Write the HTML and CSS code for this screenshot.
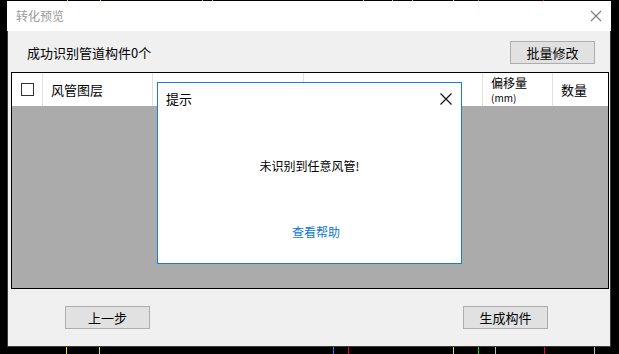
FILE: index.html
```html
<!DOCTYPE html>
<html lang="zh">
<head>
<meta charset="utf-8">
<title>转化预览</title>
<link rel="stylesheet" href="styles.css">
</head>
<body>
<div class="strip strip-top">
  <i class="tick t-y" style="left:67px"></i><i class="tick t-y" style="left:100px"></i>
  <i class="tick t-g" style="left:202px"></i><i class="tick t-g" style="left:212px"></i>
  <i class="tick t-g" style="left:363px"></i><i class="tick t-g" style="left:392px"></i>
  <i class="tick t-g" style="left:412px"></i><i class="tick t-y" style="left:453px"></i>
  <i class="tick t-gr" style="left:478px"></i><i class="tick t-r" style="left:543px"></i>
</div>
<div class="desk">
  <div class="window">
    <div class="titlebar">
      <span class="title">转化预览</span>
      <svg class="win-close" width="12" height="12" viewBox="0 0 12 12"><path d="M1 1L11 11M11 1L1 11" stroke="#7a7a7a" stroke-width="1.1" fill="none"/></svg>
    </div>
    <div class="content">
      <div class="toolbar">
        <span class="status">成功识别管道构件0个</span>
        <button class="btn">批量修改</button>
      </div>
      <div class="table">
        <div class="thead">
          <div class="th th-check"><span class="checkbox"></span></div>
          <div class="th">风管图层</div>
          <div class="th"></div>
          <div class="th"></div>
          <div class="th th-two"><span class="line">偏移量</span><span class="line unit">(mm)</span></div>
          <div class="th th-last">数量</div>
        </div>
        <div class="tbody"></div>
      </div>
      <div class="footer">
        <button class="btn">上一步</button>
        <button class="btn">生成构件</button>
      </div>
    </div>
    <div class="dialog">
      <div class="dlg-head">
        <span class="dlg-title">提示</span>
        <svg class="dlg-close" width="12" height="12" viewBox="0 0 12 12"><path d="M0.5 0.5L11.5 11.5M11.5 0.5L0.5 11.5" stroke="#111" stroke-width="1.2" fill="none"/></svg>
      </div>
      <div class="dlg-msg">未识别到任意风管!</div>
      <a class="dlg-link" href="#">查看帮助</a>
    </div>
  </div>
</div>
<div class="strip strip-bottom">
  <i class="tick t-y" style="left:66px"></i><i class="tick t-y" style="left:99px"></i>
  <i class="tick t-b" style="left:333px"></i><i class="tick t-r" style="left:348px"></i>
  <i class="tick t-y" style="left:453px"></i><i class="tick t-gr" style="left:478px"></i>
  <i class="tick t-g" style="left:495px"></i><i class="tick t-r" style="left:544px"></i>
  <i class="tick t-g" style="left:594px"></i>
</div>
</body>
</html>
```

FILE: styles.css
```css
* { box-sizing: border-box; }
html, body { margin: 0; padding: 0; }
body {
  width: 619px;
  height: 354px;
  overflow: hidden;
  background: #000;
  font-family: "Noto Sans CJK SC", "Microsoft YaHei", sans-serif;
  font-size: 13px;
  color: #000;
}
.strip { position: relative; background: #000; }
.strip-top { height: 1px; }
.strip-bottom { height: 7px; }
.tick { position: absolute; top: 0; width: 1px; height: 100%; }
.t-y { background: #f2e400; }
.t-g { background: #bdbdbd; }
.t-gr { background: #22d022; }
.t-r { background: #e01010; }
.t-b { background: #2a7cff; }

.desk { padding-left: 7px; height: 346px; }
.window {
  position: relative;
  width: 604px;
  height: 346px;
  display: flex;
  flex-direction: column;
}
.titlebar {
  height: 30px;
  background: #fff;
  display: flex;
  align-items: center;
  justify-content: space-between;
  padding: 0 9px 0 9px;
}
.title { font-size: 12px; color: #9a9a9a; line-height: 14px; }

.content {
  flex: 1;
  background: #f0f0f0;
  border: 1px solid #3a3a3a;
  border-top: none;
  display: flex;
  flex-direction: column;
}
.toolbar {
  height: 41px;
  display: flex;
  align-items: center;
  justify-content: space-between;
  padding: 2px 15px 0 19px;
}
.status { font-size: 13px; line-height: 16px; }
.btn {
  width: 85px;
  height: 23px;
  background: #e1e1e1;
  border: 1px solid #adadad;
  border-radius: 0;
  padding: 0;
  font-family: inherit;
  font-size: 13px;
  line-height: 16px;
  color: #000;
}
.table {
  margin: 0 1px 0 3px;
  height: 217px;
  border: 1px solid #000;
  display: flex;
  flex-direction: column;
}
.thead {
  height: 33px;
  background: #fff;
  display: grid;
  grid-template-columns: 31px 110px 151px 179px 70px 1fr;
}
.th {
  border-right: 1px solid #e2e2e2;
  display: flex;
  align-items: center;
  padding-left: 8px;
  font-size: 13px;
  line-height: 16px;
}
.th-check { padding-left: 9px; }
.checkbox {
  width: 13px;
  height: 13px;
  border: 1px solid #333;
  background: #fff;
}
.th-two {
  flex-direction: column;
  align-items: flex-start;
  justify-content: flex-start;
  padding-top: 2px;
}
.line { display: block; height: 16px; line-height: 16px; font-size: 12px; }
.unit { height: 13px; line-height: 13px; font-size: 10px; }
.th-last { border-right: none; }
.tbody { flex: 1; background: #ababab; }

.footer {
  flex: 1;
  display: flex;
  justify-content: space-between;
  align-items: flex-start;
  padding: 17px 62px 0 57px;
}

.dialog {
  position: absolute;
  left: 150px;
  top: 81px;
  width: 305px;
  height: 182px;
  background: #fff;
  border: 1px solid #1c7cd5;
  display: flex;
  flex-direction: column;
  align-items: center;
}
.dlg-head {
  width: 100%;
  height: 31px;
  display: flex;
  align-items: center;
  justify-content: space-between;
  padding: 0 9px 0 8px;
}
.dlg-title { font-size: 13px; line-height: 16px; }
.dlg-msg {
  margin-top: 44px;
  font-size: 12px;
  line-height: 16px;
}
.dlg-link {
  margin-top: 50px;
  padding-left: 13px;
  font-size: 12px;
  line-height: 16px;
  color: #0a78d4;
  text-decoration: none;
}
```
